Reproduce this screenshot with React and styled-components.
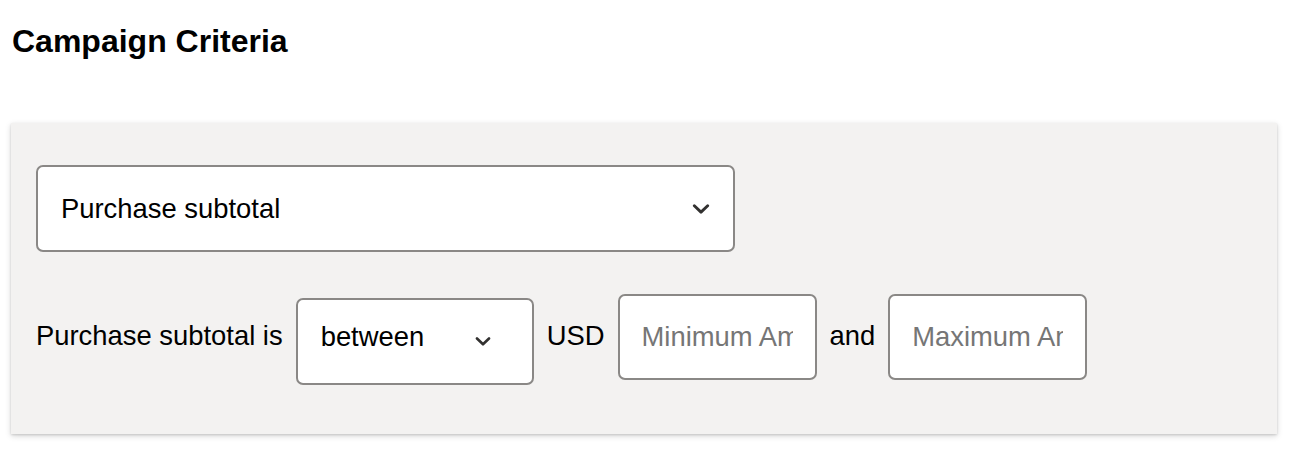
import React from "react";
import styled, { createGlobalStyle } from "styled-components";

const GlobalStyle = createGlobalStyle`
  body {
    margin: 0;
    background: #ffffff;
    font-family: "Liberation Sans", Arial, sans-serif;
    color: #1b1a19;
  }
`;

export default function App() {
  return (
    <>
      <GlobalStyle />
      <StyledPage>
        <StyledTitle>Campaign Criteria</StyledTitle>
        <StyledPanel>
          <StyledSelect $width={699}>
            <StyledSelectText>Purchase subtotal</StyledSelectText>
            <Chevron size={18} />
          </StyledSelect>
          <StyledRow>
            <StyledLabel>Purchase subtotal is</StyledLabel>
            <StyledSelect $width={238} $drop={4} $chevronGap={41}>
              <StyledSelectText $lift={10}>between</StyledSelectText>
              <Chevron size={16} />
            </StyledSelect>
            <StyledLabel>USD</StyledLabel>
            <StyledInput type="text" placeholder="Minimum Amount" />
            <StyledLabel>and</StyledLabel>
            <StyledInput type="text" placeholder="Maximum Amount" />
          </StyledRow>
        </StyledPanel>
      </StyledPage>
    </>
  );
}

function Chevron({ size }) {
  return (
    <svg
      width={size}
      height={size / 2 + 1}
      viewBox="0 0 16 9"
      fill="none"
      stroke="#323130"
      strokeWidth="2.6"
      strokeLinecap="round"
      strokeLinejoin="round"
    >
      <path d="M2 1.5 L8 7.3 L14 1.5" />
    </svg>
  );
}

const StyledPage = styled.div`
  padding: 23px 15px 20px 11px;
`;

const StyledTitle = styled.h1`
  margin: 0 0 63px 1px;
  font-size: 32px;
  font-weight: 700;
  line-height: 37px;
  color: #000000;
`;

const StyledPanel = styled.section`
  display: flex;
  flex-direction: column;
  align-items: flex-start;
  gap: 42px;
  padding: 42px 24px 49px 25px;
  background-color: #f3f2f1;
  box-shadow: 0 1px 2px rgba(0, 0, 0, 0.12), 0 2px 6px rgba(0, 0, 0, 0.16);
`;

const StyledSelect = styled.div`
  box-sizing: border-box;
  display: flex;
  align-items: center;
  justify-content: space-between;
  width: ${(p) => p.$width}px;
  height: 87px;
  margin-top: ${(p) => p.$drop || 0}px;
  padding: 0 ${(p) => p.$chevronGap || 23}px 0 23px;
  background: #ffffff;
  border: 2px solid #8a8886;
  border-radius: 7px;
  font-size: 27.4px;
  color: #000000;
`;

const StyledSelectText = styled.span`
  margin-bottom: ${(p) => p.$lift || 0}px;
`;

const StyledRow = styled.div`
  display: flex;
  align-items: flex-start;
  gap: 13px;
`;

const StyledLabel = styled.span`
  align-self: center;
  margin-bottom: 7px;
  font-size: 27.4px;
  color: #000000;
`;

const StyledInput = styled.input`
  box-sizing: border-box;
  width: 199px;
  height: 86px;
  padding: 0 22px 0 22px;
  background: #ffffff;
  border: 2px solid #8a8886;
  border-radius: 7px;
  font-family: "Liberation Sans", Arial, sans-serif;
  font-size: 27.4px;
  color: #000000;
  outline: none;

  &::placeholder {
    color: #767676;
  }
`;
